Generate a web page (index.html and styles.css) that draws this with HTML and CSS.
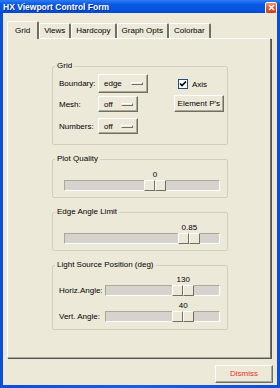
FILE: index.html
```html
<!DOCTYPE html>
<html lang="en">

<head>
    <meta charset="UTF-8">
    <title>HX Viewport Control Form</title>
    <link rel="stylesheet" href="styles.css">
</head>

<body>
    <div class="window">
        <div class="titlebar">
            <span class="title">HX Viewport Control Form</span>
            <span class="close">
                <svg width="9" height="9" viewBox="0 0 9 9">
                    <path d="M2 2 L7 7 M7 2 L2 7" stroke="#fff" stroke-width="1.6" fill="none"/>
                </svg>
            </span>
        </div>

        <div class="client">
            <div class="tabs">
                <div class="tab active">Grid</div>
                <div class="tab">Views</div>
                <div class="tab">Hardcopy</div>
                <div class="tab">Graph Opts</div>
                <div class="tab">Colorbar</div>
            </div>

            <div class="panel">
                <fieldset class="group grid-group">
                    <legend>Grid</legend>
                    <div class="grid-cols">
                        <div class="opt-list">
                            <div class="opt-row first">
                                <span class="opt-label">Boundary:</span>
                                <span class="optbtn wide">edge<i class="ind"></i></span>
                            </div>
                            <div class="opt-row">
                                <span class="opt-label">Mesh:</span>
                                <span class="optbtn">off<i class="ind"></i></span>
                            </div>
                            <div class="opt-row last">
                                <span class="opt-label">Numbers:</span>
                                <span class="optbtn">off<i class="ind"></i></span>
                            </div>
                        </div>
                        <div class="side">
                            <label class="check">
                                <span class="box">
                                    <svg width="8" height="8" viewBox="0 0 8 8">
                                        <path d="M1 3.5 L3 5.5 L7 1.5" stroke="#000" stroke-width="1.6" fill="none"/>
                                    </svg>
                                </span>
                                Axis
                            </label>
                            <span class="btn elem">Element P's</span>
                        </div>
                    </div>
                </fieldset>

                <fieldset class="group">
                    <legend>Plot Quality</legend>
                    <div class="slider full">
                        <div class="knob" style="left: 51%"><span class="val">0</span><span class="thumb"><i></i><i></i></span></div>
                    </div>
                </fieldset>

                <fieldset class="group">
                    <legend>Edge Angle Limit</legend>
                    <div class="slider full">
                        <div class="knob" style="left: 73%"><span class="val">0.85</span><span class="thumb"><i></i><i></i></span></div>
                    </div>
                </fieldset>

                <fieldset class="group light">
                    <legend>Light Source Position (deg)</legend>
                    <div class="slide-row">
                        <span class="slide-label">Horiz.Angle:</span>
                        <div class="slider">
                            <div class="knob" style="left: 58%"><span class="val">130</span><span class="thumb"><i></i><i></i></span></div>
                        </div>
                    </div>
                    <div class="slide-row">
                        <span class="slide-label">Vert. Angle:</span>
                        <div class="slider">
                            <div class="knob" style="left: 58%"><span class="val">40</span><span class="thumb"><i></i><i></i></span></div>
                        </div>
                    </div>
                </fieldset>
            </div>

            <div class="footer">
                <span class="btn dismiss">Dismiss</span>
            </div>
        </div>
    </div>
</body>

</html>
```

FILE: styles.css
```css
body {
    margin: 0;
    font-family: "Liberation Sans", Arial, sans-serif;
    font-size: 8px;
    color: #000;
}

.window {
    width: 280px;
    height: 388px;
    box-sizing: border-box;
    padding: 0 3px 3px 3px;
    display: flex;
    flex-direction: column;
    background: linear-gradient(90deg, #0a4fd8, #1660e8 50%, #0a4fd8);
}

.titlebar {
    height: 13px;
    display: flex;
    align-items: center;
    justify-content: space-between;
    background: linear-gradient(#2f7cf0, #0758e6 35%, #0554e0 80%, #0346c8);
    margin: 0 -3px;
    padding: 0 3px 0 3px;
}

.title {
    color: #fff;
    font-weight: bold;
    font-size: 8.5px;
    text-shadow: 1px 1px 0 #0a2a80;
}

.close {
    width: 10px;
    height: 10px;
    margin-top: 2px;
    border: 1px solid #fff;
    border-radius: 2px;
    background: linear-gradient(#f08a6a, #e0502c 60%, #c8401e);
    display: flex;
    align-items: center;
    justify-content: center;
}

.client {
    flex: 1;
    background-color: #ece9d8;
    padding: 8px 5px 0 4px;
    display: flex;
    flex-direction: column;
}

/* tabs */
.tabs {
    display: flex;
    align-items: flex-end;
    height: 17px;
}

.tab {
    height: 15px;
    line-height: 14px;
    box-sizing: border-box;
    padding: 0 4px;
    border: 1px solid #fff;
    border-right: 2px solid #716f64;
    border-bottom: none;
    border-radius: 2px 2px 0 0;
    background-color: #ece9d8;
}

.tab.active {
    height: 18px;
    line-height: 17px;
    padding: 0 7px;
    margin-bottom: -1px;
    z-index: 1;
}

.panel {
    height: 320px;
    box-sizing: border-box;
    margin-right: 1px;
    border: 1px solid #fff;
    border-right-color: #716f64;
    border-bottom-color: #aca899;
    box-shadow: 1px 1px 0 #555;
    padding: 22px 0 0 44px;
}

/* group boxes */
.group {
    width: 176px;
    box-sizing: border-box;
    margin: 0 0 9px 0;
    padding: 6px 7px 6px 2px;
    border: 1px solid #d0d0bf;
    border-radius: 2px;
}

.group legend {
    padding: 0 2px;
    line-height: 10px;
}

.grid-group {
    padding: 3px 4px 10px 2px;
    margin-bottom: 9px;
}

.grid-cols {
    display: flex;
    justify-content: space-between;
}

.opt-list {
    display: flex;
    flex-direction: column;
    gap: 3px;
}

.opt-row {
    display: flex;
    align-items: center;
    padding-left: 4px;
}

.opt-row.last {
    margin-top: 3px;
}

.opt-label {
    width: 39px;
}

.btn,
.optbtn {
    box-sizing: border-box;
    border: 1px solid #fff;
    border-right-color: #716f64;
    border-bottom-color: #716f64;
    box-shadow: inset -1px -1px 0 #aca899;
    background-color: #ece9d8;
}

.optbtn {
    width: 40px;
    height: 16px;
    display: flex;
    align-items: center;
    justify-content: space-between;
    padding: 0 4px 0 5px;
}

.optbtn.wide {
    width: 50px;
    height: 19px;
}

.ind {
    width: 12px;
    height: 3px;
    box-sizing: border-box;
    border: 1px solid #fff;
    border-right-color: #716f64;
    border-bottom-color: #716f64;
}

.side {
    display: flex;
    flex-direction: column;
    align-items: flex-end;
    padding-top: 5px;
}

.check {
    display: flex;
    align-items: center;
    gap: 4px;
    margin-right: 16px;
}

.box {
    width: 10px;
    height: 10px;
    box-sizing: border-box;
    border: 1px solid #1c5180;
    background-color: #fff;
    display: flex;
    align-items: center;
    justify-content: center;
}

.btn.elem {
    margin-top: 6px;
    height: 17px;
    line-height: 15px;
    padding: 0 3px;
    margin-right: -1px;
}

/* sliders */
.slider {
    position: relative;
    height: 21px;
    margin-left: 9px;
    box-sizing: border-box;
    padding-top: 10px;
}

.slider::before {
    content: "";
    display: block;
    height: 11px;
    box-sizing: border-box;
    border: 1px solid #aca899;
    border-right-color: #fff;
    border-bottom-color: #fff;
    background-color: #d6d3ce;
}

.knob {
    position: absolute;
    top: 0;
    width: 23px;
    display: flex;
    flex-direction: column;
    align-items: center;
}

.val {
    height: 10px;
    line-height: 9px;
}

.thumb {
    display: flex;
    height: 11px;
}

.thumb i {
    width: 11px;
    box-sizing: border-box;
    border: 1px solid #fff;
    border-right-color: #716f64;
    border-bottom-color: #716f64;
    background-color: #ece9d8;
}

.light {
    padding-top: 5px;
    padding-bottom: 7px;
}

.slide-row {
    display: flex;
    align-items: flex-end;
    padding-left: 4px;
}

.slide-row + .slide-row {
    margin-top: 5px;
}

.slide-label {
    width: 46px;
    line-height: 11px;
}

.slide-row .slider {
    flex: 1;
    margin-left: 0;
}

/* bottom */
.footer {
    display: flex;
    justify-content: flex-end;
    padding-top: 7px;
}

.btn.dismiss {
    width: 58px;
    height: 18px;
    line-height: 16px;
    text-align: center;
    color: #e8322a;
    margin-right: -1px;
}
```
